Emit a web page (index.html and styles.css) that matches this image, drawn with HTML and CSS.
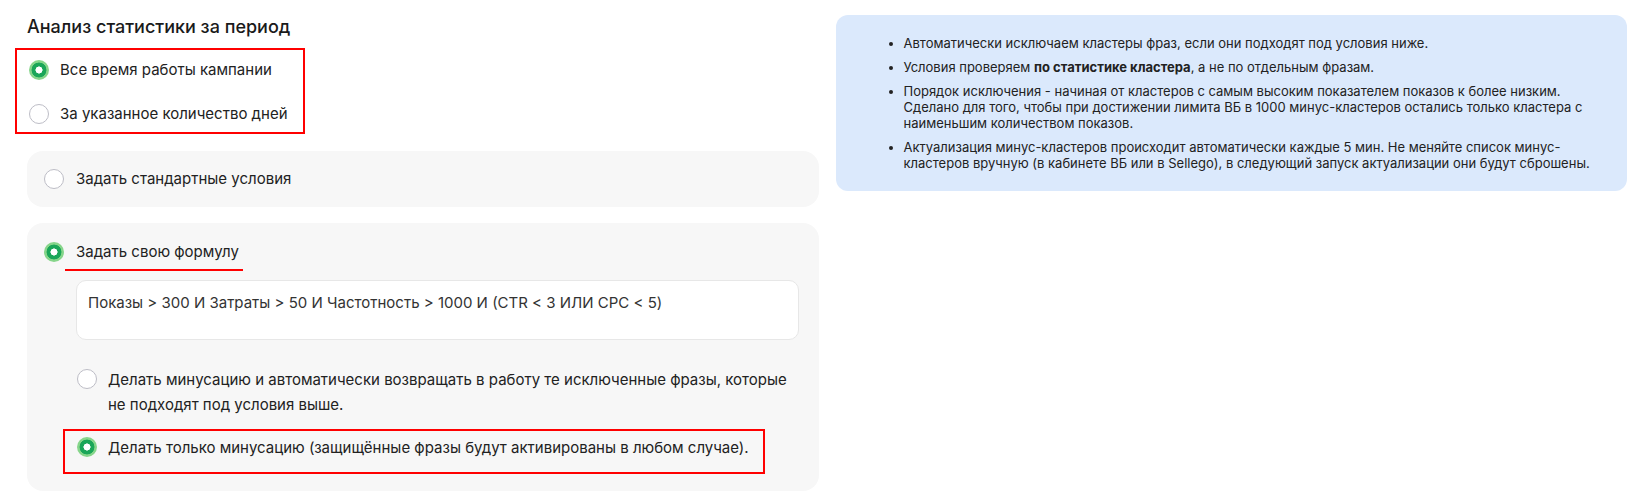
FILE: index.html
```html
<!DOCTYPE html>
<html lang="ru">
<head>
    <meta charset="UTF-8">
    <meta name="viewport" content="width=device-width, initial-scale=1.0">
    <title>Минус-кластеры</title>
    <link rel="stylesheet" href="styles.css">
</head>
<body>
    <div class="page">
        <!-- левая колонка: настройки -->
        <div class="settings">
            <h2 class="title">Анализ статистики за период</h2>

            <div class="period mark">
                <label class="option"><span class="radio checked"></span>Все время работы кампании</label>
                <label class="option"><span class="radio"></span>За указанное количество дней</label>
            </div>

            <div class="card">
                <label class="card-option"><span class="radio"></span>Задать стандартные условия</label>
            </div>

            <div class="card">
                <label class="card-option"><span class="radio checked"></span><span class="underline">Задать свою формулу</span></label>
                <div class="formula">Показы &gt; 300 И Затраты &gt; 50 И Частотность &gt; 1000 И (CTR &lt; 3 ИЛИ CPC &lt; 5)</div>
                <div class="modes">
                    <label class="mode"><span class="radio"></span><span>Делать минусацию и автоматически возвращать в работу те исключенные фразы, которые не подходят под условия выше.</span></label>
                    <label class="mode mark"><span class="radio checked"></span><span>Делать только минусацию (защищённые фразы будут активированы в любом случае).</span></label>
                </div>
            </div>
        </div>

        <!-- правая колонка: подсказка -->
        <div class="info">
            <ul>
                <li>Автоматически исключаем кластеры фраз, если они подходят под условия ниже.</li>
                <li>Условия проверяем <b>по статистике кластера</b>, а не по отдельным фразам.</li>
                <li>Порядок исключения - начиная от кластеров с самым высоким показателем показов к более низким. Сделано для того, чтобы при достижении лимита ВБ в 1000 минус-кластеров остались только кластера с наименьшим количеством показов.</li>
                <li>Актуализация минус-кластеров происходит автоматически каждые 5 мин. Не меняйте список минус-кластеров вручную (в кабинете ВБ или в Sellego), в следующий запуск актуализации они будут сброшены.</li>
            </ul>
        </div>
    </div>
</body>
</html>
```

FILE: styles.css
```css
/* Reset */
* {
    margin: 0;
    padding: 0;
    box-sizing: border-box;
}

body {
    background-color: #ffffff;
    font-family: 'Inter', 'Noto Sans', sans-serif;
    color: #222222;
}

.page {
    display: grid;
    grid-template-columns: 1fr 1fr;
    gap: 17px;
    align-items: start;
    padding: 15px 7px 0 27px;
}

/* Левая колонка */
.title {
    font-size: 18px;
    font-weight: 500;
    line-height: 24px;
    color: #1a1a1a;
    margin-bottom: 9px;
}

/* красная рамка-пометка */
.mark {
    border: 2px solid #ff0000;
}

.period {
    display: flex;
    flex-direction: column;
    gap: 20px;
    width: fit-content;
    margin-left: -12px;
    padding: 8px 15px 6px 12px;
    margin-bottom: 17px;
}

.option,
.card-option {
    display: flex;
    align-items: flex-start;
    gap: 11px;
    font-size: 15px;
    line-height: 24px;
    cursor: pointer;
}

.card-option {
    gap: 12px;
}

.radio {
    flex: none;
    width: 20px;
    height: 20px;
    margin-top: 2px;
    border-radius: 50%;
    border: 1px solid #bdbdc6;
    background-color: #ffffff;
}

.radio.checked {
    border: none;
    background: radial-gradient(circle closest-side, #ffffff 0 33%, #1aa658 38% 72%, #86d58a 77% 100%);
}

.card {
    background-color: #f7f7f7;
    border-radius: 16px;
    padding: 16px 20px 16px 17px;
    margin-bottom: 16px;
}

.card:last-child {
    padding-top: 17px;
    padding-bottom: 17px;
    margin-bottom: 0;
}

.underline {
    display: inline-block;
    margin-left: -11px;
    padding: 0 4px 5px 11px;
    border-bottom: 2px solid #ff0000;
}

.formula {
    height: 60px;
    margin: 9px 0 0 32px;
    padding: 12px 11px;
    background-color: #ffffff;
    border: 1px solid #e7e7e7;
    border-radius: 10px;
    font-size: 15px;
    line-height: 20px;
    color: #333333;
}

.modes {
    display: flex;
    flex-direction: column;
    margin: 21px 0 0 19px;
}

.mode {
    display: flex;
    align-items: flex-start;
    gap: 11px;
    padding: 4px 0 10px 12px;
    border: 2px solid transparent;
    font-size: 15px;
    line-height: 25px;
    cursor: pointer;
}

.mode .radio {
    margin-top: 2px;
}

.mode.mark {
    width: fit-content;
    padding: 4px 14px 12px 12px;
    border-color: #ff0000;
}

/* Правая колонка */
.info {
    background-color: #dbe9fc;
    border-radius: 12px;
    padding: 20px 28px;
    font-size: 13px;
    line-height: 16px;
    color: #222222;
}

.info ul {
    padding-left: 40px;
}

.info li {
    margin-bottom: 8px;
}

.info li:last-child {
    margin-bottom: 0;
}

.info b {
    font-weight: 700;
}
```
